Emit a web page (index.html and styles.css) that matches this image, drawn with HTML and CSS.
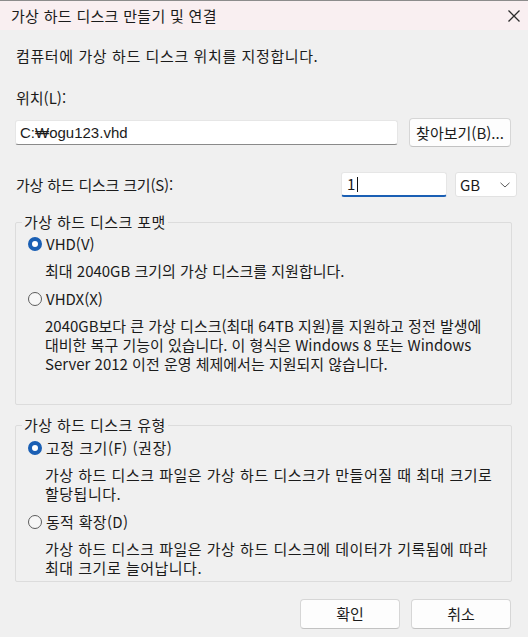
FILE: index.html
```html
<!DOCTYPE html>
<html lang="ko">
<head>
<meta charset="utf-8">
<title>가상 하드 디스크 만들기 및 연결</title>
<link rel="stylesheet" href="styles.css">
</head>
<body>
<div class="window">
  <header class="titlebar">
    <span class="title">가상 하드 디스크 만들기 및 연결</span>
    <svg class="close" viewBox="0 0 14 14" aria-label="닫기"><path d="M1.5 1.5 L12.5 12.5 M12.5 1.5 L1.5 12.5" stroke="#2b2b2b" stroke-width="1.3" fill="none"/></svg>
  </header>
  <main class="content">
    <p class="intro">컴퓨터에 가상 하드 디스크 위치를 지정합니다.</p>
    <div class="label">위치(L):</div>
    <div class="path-row">
      <div class="textbox path">C:₩ogu123.vhd</div>
      <button class="btn browse">찾아보기(B)...</button>
    </div>
    <div class="size-row">
      <span class="size-label">가상 하드 디스크 크기(S):</span>
      <div class="textbox size">1<span class="caret"></span></div>
      <div class="select">GB<svg class="chev" viewBox="0 0 10 6"><path d="M0.5 0.8 L5 5 L9.5 0.8" stroke="#5a5a5a" stroke-width="1" fill="none"/></svg></div>
    </div>
    <fieldset class="group group-format">
      <legend>가상 하드 디스크 포맷</legend>
      <div class="radio-row first"><span class="radio checked"></span><span>VHD(V)</span></div>
      <p class="desc">최대 2040GB 크기의 가상 디스크를 지원합니다.</p>
      <div class="radio-row"><span class="radio"></span><span>VHDX(X)</span></div>
      <p class="desc">2040GB보다 큰 가상 디스크(최대 64TB 지원)를 지원하고 정전 발생에<br>대비한 복구 기능이 있습니다. 이 형식은 Windows 8 또는 Windows<br>Server 2012 이전 운영 체제에서는 지원되지 않습니다.</p>
    </fieldset>
    <fieldset class="group group-type">
      <legend>가상 하드 디스크 유형</legend>
      <div class="radio-row first"><span class="radio checked"></span><span class="wide">고정 크기(F) (권장)</span></div>
      <p class="desc wide">가상 하드 디스크 파일은 가상 하드 디스크가 만들어질 때 최대 크기로<br>할당됩니다.</p>
      <div class="radio-row"><span class="radio"></span><span class="semi">동적 확장(D)</span></div>
      <p class="desc wide">가상 하드 디스크 파일은 가상 하드 디스크에 데이터가 기록됨에 따라<br>최대 크기로 늘어납니다.</p>
    </fieldset>
    <div class="actions">
      <button class="btn action">확인</button>
      <button class="btn action">취소</button>
    </div>
  </main>
</div>
</body>
</html>
```
FILE: styles.css
```css
* { box-sizing: border-box; }
html, body { margin: 0; padding: 0; }
body {
  width: 528px;
  height: 637px;
  overflow: hidden;
  background: #f0f0f0;
  font-family: "Noto Sans CJK KR", "Noto Sans", sans-serif;
  font-size: 15px;
  line-height: 20px;
  color: #1b1b1b;
}
.window {
  height: 637px;
  display: flex;
  flex-direction: column;
  border-top: 1px solid #8c8c8c;
}
.titlebar {
  flex: none;
  height: 29px;
  background: #f9eff1;
  display: flex;
  align-items: center;
  justify-content: space-between;
  padding: 0 7px 0 11px;
}
.title { letter-spacing: 0.3px; }
.close { width: 14px; height: 14px; }
.content {
  display: flex;
  flex-direction: column;
  padding: 0 11px 0 15px;
}
.intro { margin: 16px 0 0 1px; letter-spacing: 0.6px; }
.label { margin: 22px 0 0 1px; }
.path-row {
  margin-top: 10px;
  display: flex;
  align-items: center;
  gap: 11px;
  height: 29px;
}
.textbox {
  background: #fff;
  border: 1px solid #e6e6e6;
  border-bottom-color: #8a8a8a;
  border-radius: 3px;
  height: 25px;
  display: flex;
  align-items: center;
  padding: 0 4px;
}
.path {
  flex: 1;
  font-family: "Liberation Sans", "Noto Sans CJK KR", sans-serif;
  font-size: 15px;
}
.btn {
  font: inherit;
  color: inherit;
  background: #fdfdfd;
  border: 1px solid #d6d6d6;
  border-bottom-color: #c2c2c2;
  border-radius: 4px;
  padding: 0;
}
.browse { width: 102px; height: 29px; margin-right: 6px; }
.size-row {
  margin-top: 25px;
  display: flex;
  align-items: center;
  height: 25px;
}
.size-label { flex: 1; padding-left: 1px; letter-spacing: -0.2px; }
.size {
  width: 106px;
  border-bottom: 2px solid #1a5fb4;
  padding-left: 5px;
}
.caret {
  display: inline-block;
  width: 1px;
  height: 15px;
  background: #111;
  margin-left: 2px;
}
.select {
  margin-left: 8px;
  width: 62px;
  height: 25px;
  background: #fff;
  border: 1px solid #e2e2e2;
  border-radius: 3px;
  display: flex;
  align-items: center;
  justify-content: space-between;
  padding: 0 6px 0 4px;
}
.chev { width: 10px; height: 6px; }
.group {
  margin: 0 5px 0 0;
  border: 1px solid #dcdcdc;
  border-radius: 2px;
  padding: 0 6px 0 12px;
}
.group legend {
  margin-left: -6px;
  padding: 0 2px;
  line-height: 20px;
  letter-spacing: 0.4px;
}
.group-format { margin-top: 15px; padding-bottom: 31px; }
.group-type { margin-top: 10px; padding-bottom: 4px; }
.radio-row {
  display: flex;
  align-items: center;
  gap: 4px;
  height: 20px;
  margin-top: 9px;
}
.group-format .radio-row.first { margin-top: 2px; }
.group-type .radio-row.first { margin-top: 3px; }
.radio {
  width: 14px;
  height: 14px;
  border-radius: 50%;
  border: 1px solid #5c5c5c;
  background: #f7f7f7;
  flex: none;
}
.radio.checked {
  border: 4px solid #1a5fb4;
  background: #fff;
}
.desc {
  margin: 7px 0 0 17px;
  line-height: 19px;
  white-space: nowrap;
}
.wide { letter-spacing: 0.5px; }
.semi { letter-spacing: 0.3px; }
.actions {
  margin: 17px 6px 0 0;
  display: flex;
  justify-content: flex-end;
  gap: 11px;
}
.action { width: 100px; height: 30px; }
```
